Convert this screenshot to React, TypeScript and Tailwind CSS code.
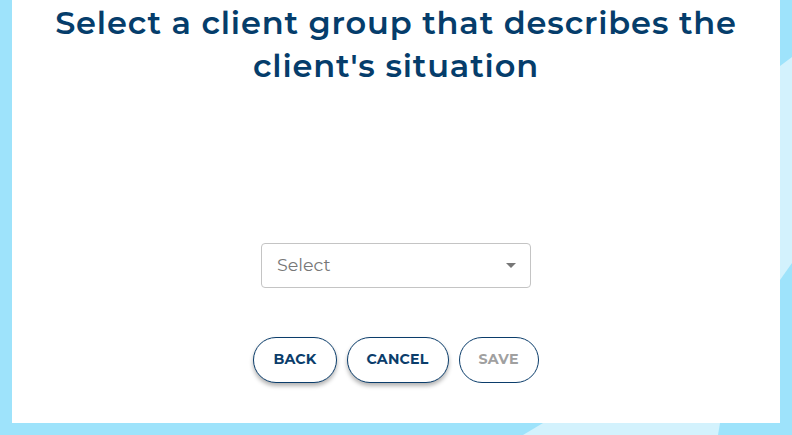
import React from 'react';

const font = { fontFamily: '"Montserrat", "Inter", "Liberation Sans", sans-serif' };

function Backdrop() {
  return (
    <svg className="absolute inset-0 h-full w-full" viewBox="0 0 792 435" preserveAspectRatio="none">
      <rect width="792" height="435" fill="#9ee3fb" />
      <polygon points="780,66 792,57 792,263 780,280" fill="#d3f2fd" />
      <polygon points="543,423 720,423 718,435 523,435" fill="#d3f2fd" />
    </svg>
  );
}

function PillButton({ label, disabled }: { label: string; disabled?: boolean }) {
  return (
    <button
      type="button"
      disabled={disabled}
      className={
        'h-[46px] rounded-full border border-[#0b3d6b] bg-white px-[19px] text-[14.2px] font-bold tracking-[0.2px] ' +
        (disabled ? 'text-[#a0a0a0]' : 'text-[#0b3d6b] shadow-[0_3px_4px_rgba(0,0,0,0.3)]')
      }
    >
      {label}
    </button>
  );
}

export default function App() {
  return (
    <div className="relative h-[435px] w-[792px] overflow-hidden" style={font}>
      <Backdrop />
      <div className="relative mx-[12px] flex h-[423px] flex-col items-center bg-white">
        <h1 className="mt-[1px] text-center text-[32px] font-semibold leading-[43px] tracking-[0.85px] text-[#053d6b]">
          Select a client group that describes the
          <br />
          client's situation
        </h1>
        <div className="mt-[156px] flex h-[45px] w-[270px] items-center justify-between rounded-[4px] border border-[#c4c4c4] pl-[15px] pr-[14px]">
          <span className="text-[17.5px] text-[#777]">Select</span>
          <span className="h-0 w-0 border-x-[5px] border-t-[5px] border-x-transparent border-t-[#777]" />
        </div>
        <div className="mt-[49px] flex gap-[10px]">
          <PillButton label="BACK" />
          <PillButton label="CANCEL" />
          <PillButton label="SAVE" disabled />
        </div>
      </div>
    </div>
  );
}
